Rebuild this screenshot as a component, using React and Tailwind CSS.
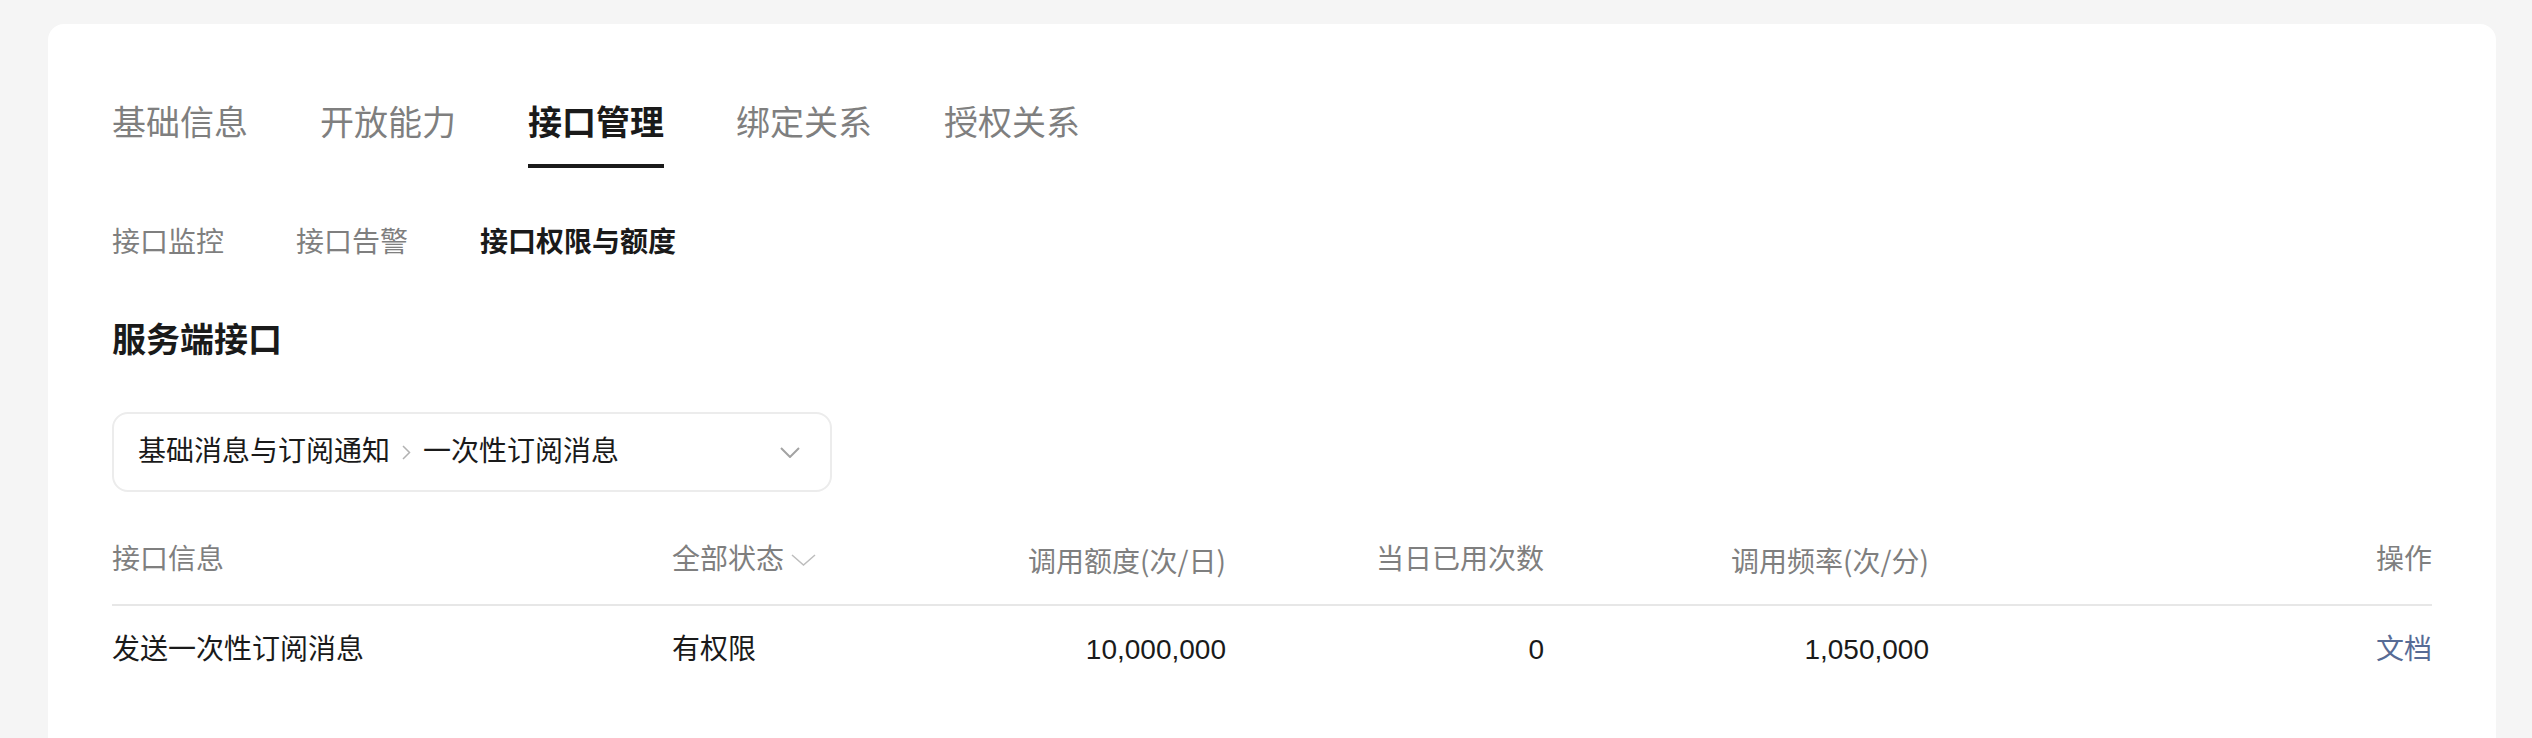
import React from "react";

const font = { fontFamily: '"Liberation Sans", "Noto Sans CJK SC", sans-serif' };

function Chevron({ className, w, h, color, sw }) {
  return (
    <svg width={w} height={h} viewBox={`0 0 ${w} ${h}`} className={className} fill="none">
      <polyline points={`1,1 ${w / 2},${h - 1} ${w - 1},1`} stroke={color} strokeWidth={sw} strokeLinejoin="miter" />
    </svg>
  );
}

export default function App() {
  const mainTabs = ["基础信息", "开放能力", "接口管理", "绑定关系", "授权关系"];
  const subTabs = ["接口监控", "接口告警", "接口权限与额度"];
  return (
    <div className="min-h-screen bg-[#f5f5f5] pt-[24px] pl-[48px] pr-[36px]" style={font}>
      <div className="bg-white rounded-[16px] pt-[75px] px-[64px] pb-[72px]">
        {/* main tabs */}
        <div className="flex gap-[72px]">
          {mainTabs.map((t, i) => (
            <div key={t} className="flex flex-col">
              <span
                className={
                  "text-[34px] leading-[48px] " +
                  (i === 2 ? "text-[#1a1a1a] font-semibold" : "text-[#7f7f7f]")
                }
              >
                {t}
              </span>
              <div className={"mt-[17px] h-[4px] " + (i === 2 ? "bg-[#1a1a1a]" : "bg-transparent")} />
            </div>
          ))}
        </div>

        {/* sub tabs */}
        <div className="flex gap-[72px] mt-[55px]">
          {subTabs.map((t, i) => (
            <span
              key={t}
              className={
                "text-[28px] leading-[40px] " +
                (i === 2 ? "text-[#1a1a1a] font-semibold" : "text-[#7f7f7f]")
              }
            >
              {t}
            </span>
          ))}
        </div>

        {/* heading */}
        <div className="mt-[53px] text-[34px] leading-[48px] font-semibold text-[#1a1a1a]">服务端接口</div>

        {/* select */}
        <div className="mt-[48px] w-[720px] h-[80px] rounded-[16px] border-2 border-[#ececec] flex items-center justify-between pl-[24px] pr-[30px]">
          <div className="flex items-center text-[28px] leading-[40px] text-[#1a1a1a]">
            <span>基础消息与订阅通知</span>
            <svg width="9" height="15" viewBox="0 0 9 15" fill="none" className="mx-[12px]">
              <polyline points="1,1 7.5,7.5 1,14" stroke="#b2b2b2" strokeWidth="1.5" />
            </svg>
            <span>一次性订阅消息</span>
          </div>
          <Chevron w={20} h={11} color="#a3a3a3" sw={2} />
        </div>

        {/* table */}
        <div className="mt-[28px]">
          <div className="grid grid-cols-[560px_280px_274px_318px_385px_1fr] text-[28px] leading-[40px] text-[#7f7f7f] pt-[20px] pb-[24px] border-b-2 border-[#e7e7e7]">
            <div>接口信息</div>
            <div className="flex items-center">
              <span>全部状态</span>
              <Chevron className="ml-[7px]" w={25} h={12} color="#bdbdbd" sw={1.5} />
            </div>
            <div className="text-right" style={{ fontFamily: '"Noto Sans CJK SC", sans-serif' }}>调用额度(次/日)</div>
            <div className="text-right">当日已用次数</div>
            <div className="text-right" style={{ fontFamily: '"Noto Sans CJK SC", sans-serif' }}>调用频率(次/分)</div>
            <div className="text-right">操作</div>
          </div>
          <div className="grid grid-cols-[560px_280px_274px_318px_385px_1fr] text-[28px] leading-[40px] text-[#1a1a1a] pt-[24px] pb-[24px]">
            <div>发送一次性订阅消息</div>
            <div>有权限</div>
            <div className="text-right">10,000,000</div>
            <div className="text-right">0</div>
            <div className="text-right">1,050,000</div>
            <div className="text-right text-[#576b95]">文档</div>
          </div>
        </div>
      </div>
    </div>
  );
}
